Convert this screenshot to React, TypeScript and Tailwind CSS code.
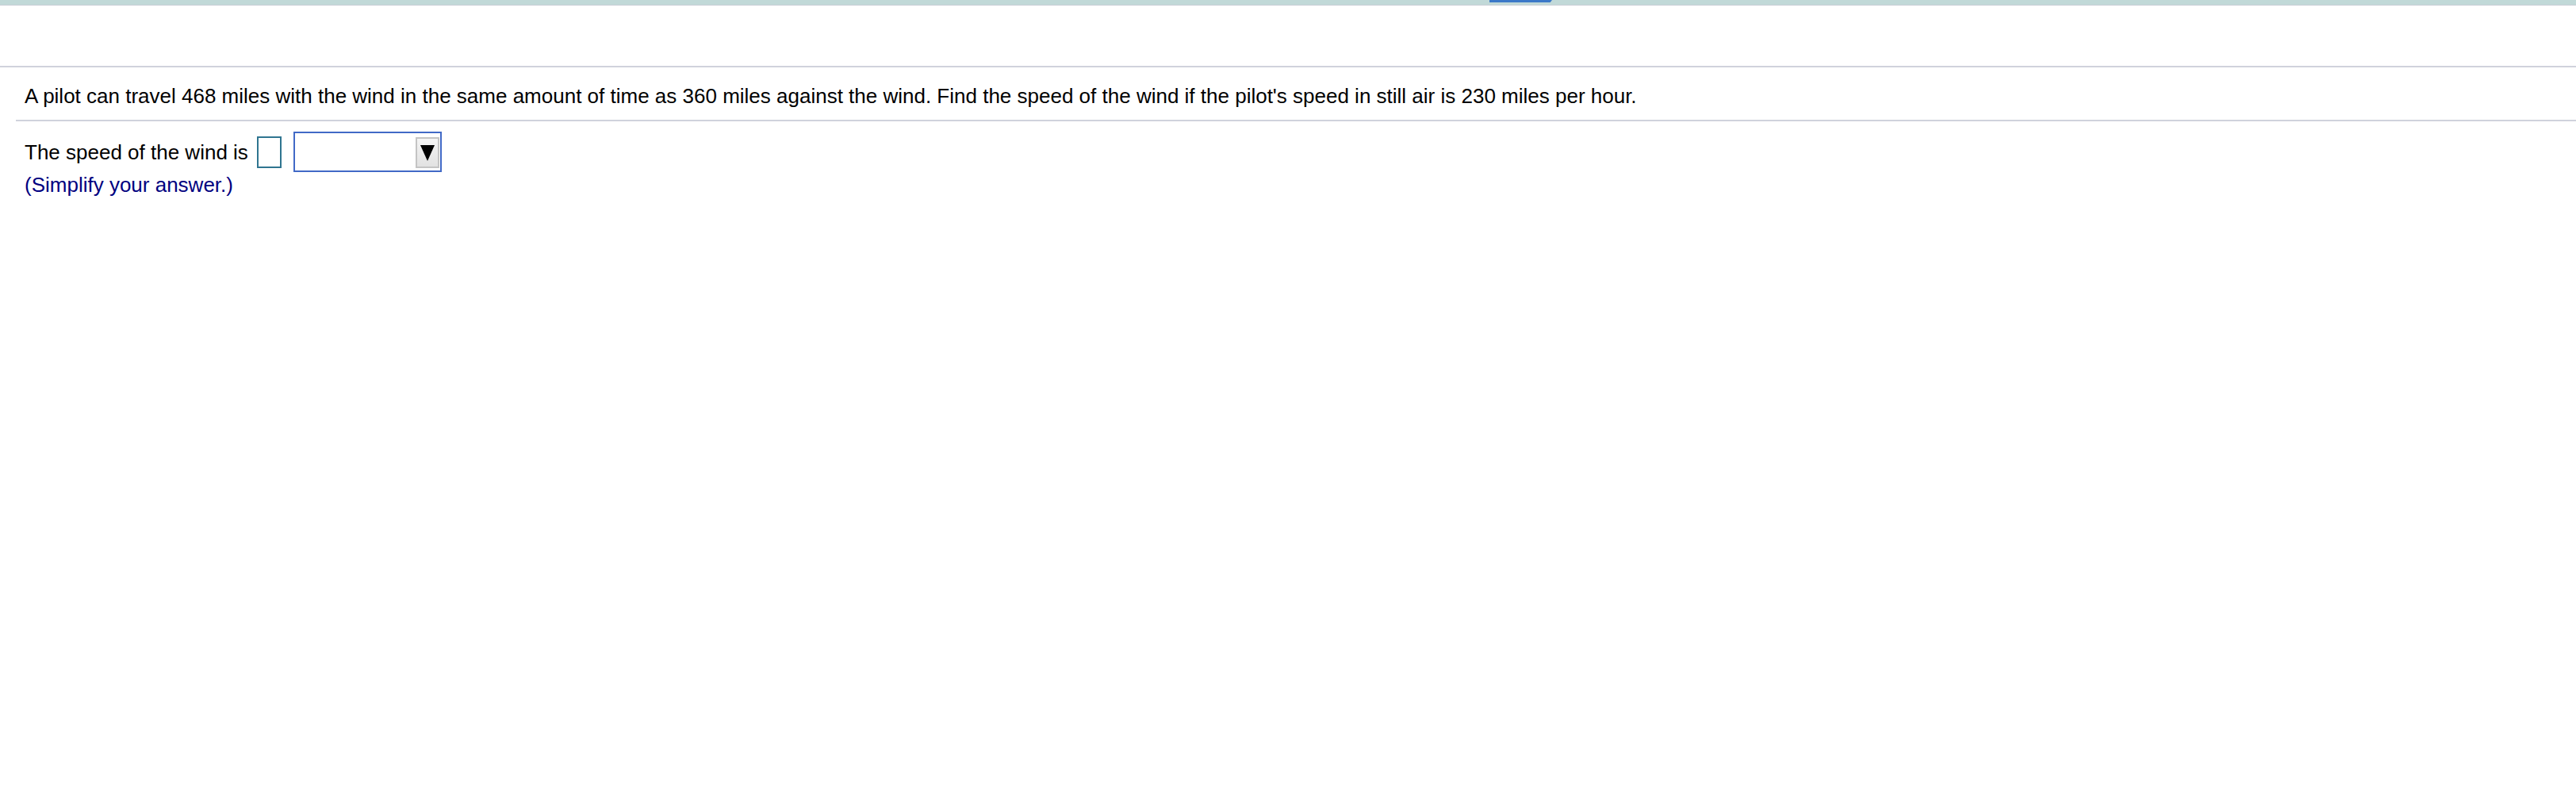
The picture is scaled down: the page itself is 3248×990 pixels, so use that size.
import React from "react";

export default function App() {
  return (
    <div className="w-[3248px] h-[990px] bg-white text-black" style={{ fontFamily: '"Liberation Sans", Arial, sans-serif' }}>
      <div className="relative h-[6px] bg-[#c1d9d8]">
        <div className="absolute left-[1878px] top-0 h-[3px] w-[79px] bg-[#3b78c8] [clip-path:polygon(0_0,100%_0,97%_100%,0_100%)]" />
      </div>
      <div className="h-[1px] bg-[#c9cdd6]" />
      <div className="h-[76px]" />
      <div className="h-[2px] bg-[#d0d2dc]" />
      <div className="pl-[31px] pt-[21px] pb-[15px] text-[26px] leading-[30px]">
        A pilot can travel 468 miles with the wind in the same amount of time as 360 miles against the wind. Find the speed of the wind if the pilot's speed in still air is 230 miles per hour.
      </div>
      <div className="ml-[20px] h-[2px] bg-[#d0d2dc]" />
      <div className="pl-[31px] pt-[13px] text-[26px]">
        <div className="flex items-center h-[51px]">
          <span className="leading-[30px]">The speed of the wind is</span>
          <span className="ml-[11px] inline-block w-[31px] h-[40px] border-2 border-[#2f7590] bg-white" />
          <span className="ml-[15px] relative inline-block w-[187px] h-[51px] border-2 border-[#4169c6] bg-white">
            <span className="absolute right-[1px] top-[5px] w-[30px] h-[39px] border-2 border-[#c4c4c4] bg-gradient-to-b from-[#f4f4f4] to-[#e2e2e2] flex items-center justify-center">
              <svg width="20" height="22" viewBox="0 0 20 22">
                <polygon points="1,1 19,1 10,21" fill="#000" />
              </svg>
            </span>
          </span>
        </div>
        <div className="text-[#000080] leading-[30px] mt-[1px]">(Simplify your answer.)</div>
      </div>
    </div>
  );
}
